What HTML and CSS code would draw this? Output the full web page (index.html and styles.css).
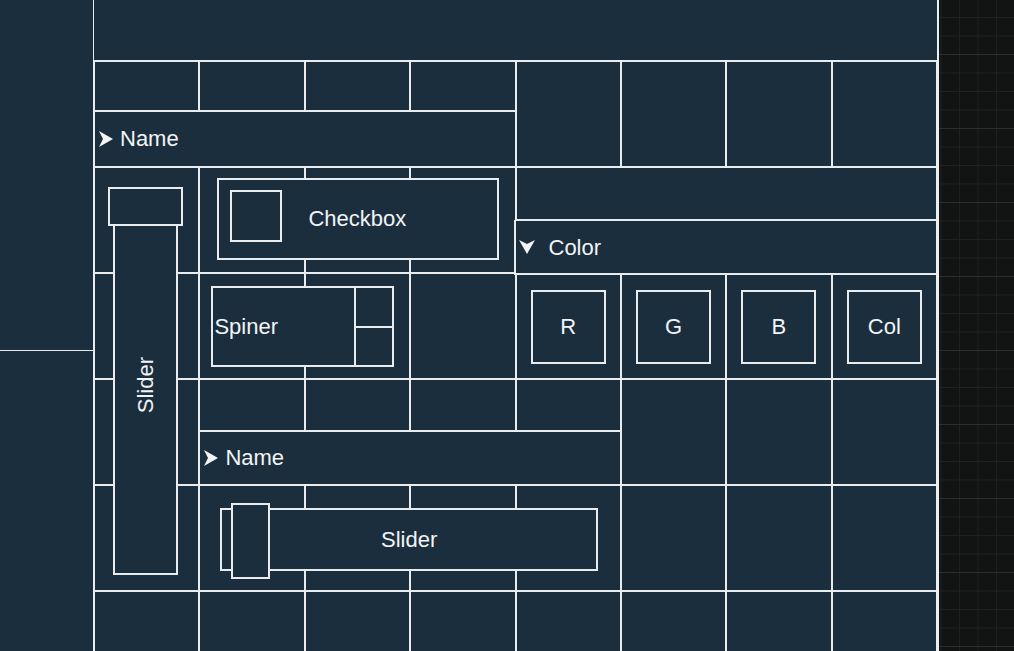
FILE: index.html
```html
<!DOCTYPE html>
<html lang="en">
<head>
<meta charset="utf-8">
<title>Layout editor</title>
<link rel="stylesheet" href="styles.css">
</head>
<body>
<div class="app">
  <aside class="sidebar">
    <div class="side-top"></div>
    <div class="side-bottom"></div>
  </aside>

  <main class="board">
    <div class="layer cells-layer">
      <div class="top-area"></div>

      <!-- row 2 -->
      <div class="stack span-left">
        <div class="subrow h50">
          <div class="cell"></div><div class="cell"></div><div class="cell"></div><div class="cell"></div>
        </div>
        <div class="header">
          <svg class="arrow-right" viewBox="0 0 14 16" width="14" height="16"><polygon points="0,0 14,8 0,16 4,8"/></svg>
          <span>Name</span>
        </div>
      </div>
      <div class="cell"></div><div class="cell"></div><div class="cell"></div><div class="cell"></div>

      <!-- row 3 -->
      <div class="cell"></div><div class="cell"></div><div class="cell"></div><div class="cell"></div>
      <div class="stack span-right">
        <div class="blank"></div>
        <div class="header header-color">
          <svg class="arrow-down" viewBox="0 0 16 14" width="16" height="14"><polygon points="0,0 8,4 16,0 8,14"/></svg>
          <span>Color</span>
        </div>
      </div>

      <!-- row 4 -->
      <div class="cell"></div><div class="cell"></div><div class="cell"></div><div class="cell"></div>
      <div class="cell center"><div class="swatch">R</div></div>
      <div class="cell center"><div class="swatch">G</div></div>
      <div class="cell center"><div class="swatch">B</div></div>
      <div class="cell center"><div class="swatch">Col</div></div>

      <!-- row 5 -->
      <div class="cell"></div>
      <div class="stack span-mid">
        <div class="subrow h52">
          <div class="cell"></div><div class="cell"></div><div class="cell"></div><div class="cell"></div>
        </div>
        <div class="header">
          <svg class="arrow-right" viewBox="0 0 14 16" width="14" height="16"><polygon points="0,0 14,8 0,16 4,8"/></svg>
          <span>Name</span>
        </div>
      </div>
      <div class="cell"></div><div class="cell"></div><div class="cell"></div>

      <!-- row 6 -->
      <div class="cell"></div><div class="cell"></div><div class="cell"></div><div class="cell"></div>
      <div class="cell"></div><div class="cell"></div><div class="cell"></div><div class="cell"></div>

      <!-- row 7 -->
      <div class="cell"></div><div class="cell"></div><div class="cell"></div><div class="cell"></div>
      <div class="cell"></div><div class="cell"></div><div class="cell"></div><div class="cell"></div>
    </div>

    <div class="layer widgets-layer">
      <div class="checkbox">
        <div class="check-square"></div>
        <span>Checkbox</span>
      </div>

      <div class="spinner">
        <span class="spinner-label">Spiner</span>
        <div class="spinner-buttons">
          <div class="spin-btn"></div>
          <div class="spin-btn"></div>
        </div>
      </div>

      <div class="vslider">
        <div class="vslider-thumb"></div>
        <div class="vslider-track"><span class="vlabel">Slider</span></div>
      </div>

      <div class="hslider">
        <div class="hslider-thumb"></div>
        <span>Slider</span>
      </div>
    </div>
  </main>

  <div class="viewport"></div>
</div>
</body>
</html>
```

FILE: styles.css
```css
* { box-sizing: border-box; }

html, body {
  margin: 0;
  padding: 0;
  background: #1b2e3e;
}

body {
  font-family: "Liberation Sans", Arial, sans-serif;
  font-size: 22px;
  color: #f2f4f5;
}

.app {
  display: flex;
  width: 1014px;
  height: 651px;
  overflow: hidden;
}

.sidebar {
  width: 94px;
  flex: none;
  display: flex;
  flex-direction: column;
  border-right: 1px solid #e9ecee;
  background: #1b2e3e;
}

.side-top {
  height: 351px;
  border-bottom: 1px solid #e9ecee;
}

.side-bottom { flex: 1; }

.board {
  width: 845px;
  flex: none;
  height: 651px;
  overflow: hidden;
  border-right: 2px solid #eceeef;
  background: #1b2e3e;
  display: grid;
  grid-template-columns: 100%;
  grid-template-rows: 100%;
}

.layer {
  grid-area: 1 / 1;
  display: grid;
  grid-template-columns: repeat(8, 1fr);
  grid-template-rows: 61px repeat(6, 106px);
  min-height: 0;
}

.top-area {
  grid-column: 1 / 9;
  border-bottom: 1px solid #e9ecee;
}

.cell {
  border: 1px solid #e9ecee;
  min-width: 0;
}

.center {
  display: flex;
  align-items: center;
  justify-content: center;
  padding-top: 2px;
}

.stack {
  display: flex;
  flex-direction: column;
  min-width: 0;
}

.span-left { grid-column: 1 / 5; }
.span-right { grid-column: 5 / 9; }
.span-mid { grid-column: 2 / 6; }

.subrow {
  display: grid;
  grid-template-columns: repeat(4, 1fr);
  flex: none;
}

.h50 { height: 50px; }
.h52 { height: 52px; }

.blank {
  height: 53px;
  border: 1px solid #e9ecee;
  flex: none;
}

.header {
  flex: 1;
  border: 1px solid #e9ecee;
  display: flex;
  align-items: center;
  gap: 7px;
  padding-left: 4px;
}

.header-color {
  gap: 14px;
  margin-bottom: -2px;
  margin-left: -2px;
}

.arrow-right, .arrow-down {
  fill: #f4f5f6;
  flex: none;
}

.arrow-down { margin-top: -2px; }

.swatch {
  width: 75px;
  height: 74px;
  border: 2px solid #e9ecee;
  display: flex;
  align-items: center;
  justify-content: center;
}

/* widgets */
.checkbox {
  grid-area: 3 / 2 / 4 / 5;
  margin: 11px 17px 13px 18px;
  border: 2px solid #e9ecee;
  background: #1b2e3e;
  display: flex;
  align-items: center;
  gap: 26px;
  padding-left: 11px;
}

.check-square {
  width: 52px;
  height: 52px;
  border: 2px solid #e9ecee;
  margin-top: -6px;
}

.checkbox span { margin-top: -1px; }

.spinner {
  grid-area: 4 / 2 / 5 / 4;
  margin: 13px 16px 12px 12px;
  border: 2px solid #e9ecee;
  background: #1b2e3e;
  display: flex;
}

.spinner-label {
  flex: 1;
  display: flex;
  align-items: center;
  padding-left: 1px;
}

.spinner-buttons {
  width: 38px;
  border-left: 2px solid #e9ecee;
  display: flex;
  flex-direction: column;
}

.spin-btn { flex: 1; }
.spin-btn + .spin-btn { border-top: 2px solid #e9ecee; }

.vslider {
  grid-area: 3 / 1 / 7 / 2;
  margin: 20px 16px 16px 14px;
  display: flex;
  flex-direction: column;
  align-items: center;
}

.vslider-thumb {
  width: 75px;
  height: 39px;
  border: 2px solid #e9ecee;
  background: #1b2e3e;
  flex: none;
}

.vslider-track {
  width: 65px;
  flex: 1;
  margin-top: -2px;
  border: 2px solid #e9ecee;
  background: #1b2e3e;
  display: flex;
  align-items: center;
  justify-content: center;
  padding-bottom: 28px;
}

.vlabel {
  writing-mode: vertical-rl;
  transform: rotate(180deg);
}

.hslider {
  grid-area: 6 / 2 / 7 / 6;
  margin: 23px 23px 20px 21px;
  border: 2px solid #e9ecee;
  background: #1b2e3e;
  position: relative;
  display: flex;
  align-items: center;
  justify-content: center;
}

.hslider-thumb {
  position: absolute;
  left: 9px;
  top: -7px;
  width: 39px;
  height: 76px;
  border: 2px solid #e9ecee;
  background: #1b2e3e;
}

.viewport {
  flex: 1;
  background-color: #121313;
  background-image:
    linear-gradient(#2c2d2d 1px, transparent 1px),
    linear-gradient(#1f2020 1px, transparent 1px),
    linear-gradient(90deg, #1f2020 1px, transparent 1px);
  background-size: 100% 74px, 100% 18.5px, 18.5px 100%;
  background-position: 0 54px, 0 17px, 1.5px 0;
}
```
